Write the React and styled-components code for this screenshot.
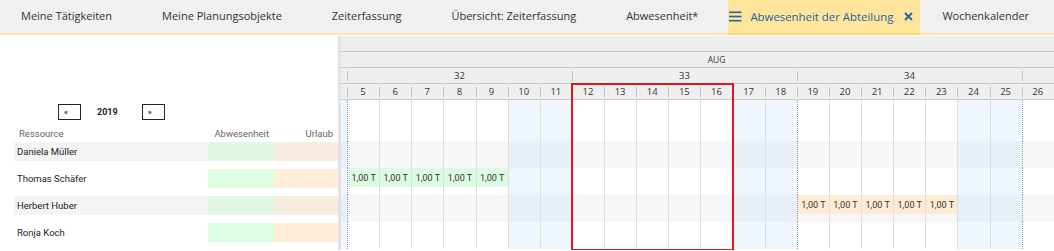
import React from 'react';
import styled, { createGlobalStyle } from 'styled-components';

const COL = 32.14;

const GlobalStyle = createGlobalStyle`
  html, body {
    margin: 0;
    padding: 0;
    background: #fff;
    overflow: hidden;
  }
  body {
    font-family: Roboto, "Liberation Sans", sans-serif;
    color: #333;
  }
`;

const TabBar = styled.div`
  display: flex;
  height: 33px;
  background-color: #f0f0f0;
  border-bottom: 2px solid #fde8a6;
`;

const Tab = styled.div`
  box-sizing: border-box;
  display: flex;
  align-items: center;
  gap: 8px;
  padding: 0 25px 2px;
  font-family: "Open Sans", "Noto Sans", sans-serif;
  font-size: 11px;
  color: #333;
  white-space: nowrap;

  &:first-child {
    padding-left: 21px;
  }
`;

const ActiveTab = styled(Tab)`
  padding: 0 7px 0 1px;
  margin-left: 5px;
  margin-bottom: -2px;
  background-color: #ffe59b;
  border-bottom: 2px solid #fcd873;
  color: #2562a7;
  font-size: 11.4px;
  & + div {
    padding-left: 22px;
  }
`;

const CloseMark = styled.span`
  display: flex;
  margin-left: 3px;
`;

const Main = styled.div`
  display: flex;
  padding-top: 1px;
`;

const LeftPanel = styled.div`
  width: 338px;
  flex-shrink: 0;
  padding-top: 68px;
`;

const YearNav = styled.div`
  display: flex;
  align-items: center;
  height: 16px;
  padding-left: 58px;
`;

const YearButton = styled.div`
  box-sizing: border-box;
  width: 23px;
  height: 16px;
  border: 1px solid #222;
  background: #fff;
  font-size: 8px;
  font-weight: bold;
  line-height: 13px;
  padding-left: 5px;
  color: #222;
`;

const YearLabel = styled.div`
  margin: 0 24px 0 16px;
  font-size: 9px;
  font-weight: bold;
  color: #222;
`;

const ResGrid = styled.div`
  display: grid;
  grid-template-columns: 194px 66px 64px;
  margin-left: 14px;
`;

const HeadCell = styled.div`
  box-sizing: border-box;
  height: 22px;
  display: flex;
  align-items: flex-end;
  justify-content: ${(p) => (p.right ? 'flex-end' : 'flex-start')};
  padding: 0 ${(p) => (p.right ? '5px' : '0')} 3px ${(p) => (p.right ? '0' : '5px')};
  font-size: 9.5px;
  color: #666;
`;

const ResCell = styled.div`
  box-sizing: border-box;
  height: 19px;
  margin-bottom: 8px;
  display: flex;
  align-items: center;
  padding-left: 3px;
  font-size: 9.5px;
  color: #222;
  background-color: ${(p) => p.bg};
`;

const Divider = styled.div`
  width: 3px;
  flex-shrink: 0;
  background-color: #e4e0e9;
`;

const Timeline = styled.div`
  position: relative;
  flex: 1;
  overflow: hidden;
`;

const TimelineInner = styled.div`
  margin-left: ${-(COL - 6)}px;
  width: ${COL * 23}px;
`;

const HeadRow = styled.div`
  display: flex;
  height: 15px;
  background-color: #efefef;
  border-bottom: 1px solid #cbcbcb;
  font-family: "Open Sans", "Noto Sans", sans-serif;
  font-size: 9.5px;
  color: #333;
`;

const MonthCell = styled.div`
  flex-shrink: 0;
  width: ${COL * 31}px;
  margin-left: ${-COL * 3}px;
  text-align: center;
  line-height: 15px;
  font-size: 8.5px;
`;

const TickCell = styled.div`
  position: relative;
  flex-shrink: 0;
  width: ${(p) => p.span * COL}px;
  text-align: center;
  line-height: 15px;

  &::before {
    content: '';
    position: absolute;
    left: 0;
    top: 3px;
    bottom: 2px;
    border-left: 1px solid #c4c4c4;
  }
`;

const Spacer = styled.div`
  display: flex;
  height: 41px;
`;

const BodyRow = styled.div`
  display: flex;
  height: 27px;
  background-color: ${(p) => (p.striped ? '#f7f7f7' : '#fff')};
`;

const DayCell = styled.div`
  box-sizing: border-box;
  flex-shrink: 0;
  width: ${COL}px;
  border-left: 1px ${(p) => (p.monday ? 'dotted #8d97ab' : 'solid #dedede')};
  background-color: ${(p) => (p.weekend ? 'rgba(190, 220, 250, 0.25)' : 'transparent')};
`;

const Chip = styled.div`
  height: 19px;
  display: flex;
  align-items: center;
  justify-content: center;
  background-color: ${(p) => (p.kind === 'vacation' ? '#ffecd5' : '#dbfce2')};
  font-size: 9px;
  color: #333;
  white-space: nowrap;
`;

const Highlight = styled.div`
  position: absolute;
  left: 230px;
  top: 47px;
  width: 163px;
  height: 168px;
  box-sizing: border-box;
  border: 2px solid #e5151c;
  pointer-events: none;
`;

const tabs = [
  'Meine Tätigkeiten',
  'Meine Planungsobjekte',
  'Zeiterfassung',
  'Übersicht: Zeiterfassung',
  'Abwesenheit*',
];

// day 4 is the Sunday that only peeks in at the left edge
const days = Array.from({ length: 23 }, (_, i) => i + 4);
const isWeekend = (d) => [4, 10, 11, 17, 18, 24, 25].includes(d);
const isMonday = (d) => [5, 12, 19, 26].includes(d);

const weeks = [
  { label: '', span: 1 },
  { label: '32', span: 7 },
  { label: '33', span: 7 },
  { label: '34', span: 7 },
  { label: '', span: 1 },
];

const people = [
  { name: 'Daniela Müller', entries: {} },
  { name: 'Thomas Schäfer', entries: { 5: 'absence', 6: 'absence', 7: 'absence', 8: 'absence', 9: 'absence' } },
  { name: 'Herbert Huber', entries: { 19: 'vacation', 20: 'vacation', 21: 'vacation', 22: 'vacation', 23: 'vacation' } },
  { name: 'Ronja Koch', entries: {} },
];

const MenuIcon = () => (
  <svg width="13" height="11" viewBox="0 0 13 11">
    <rect x="0" y="0.5" width="12.5" height="1.6" fill="#2562a7" />
    <rect x="0" y="4.7" width="12.5" height="1.6" fill="#2562a7" />
    <rect x="0" y="8.9" width="12.5" height="1.6" fill="#2562a7" />
  </svg>
);

const CloseIcon = () => (
  <svg width="9" height="9" viewBox="0 0 9 9">
    <path d="M1 1 L8 8 M8 1 L1 8" stroke="#2562a7" strokeWidth="1.8" />
  </svg>
);

const App = () => {
  return (
    <>
      <GlobalStyle />
      <TabBar>
        {tabs.map((t) => (
          <Tab key={t}>{t}</Tab>
        ))}
        <ActiveTab>
          <MenuIcon />
          Abwesenheit der Abteilung
          <CloseMark>
            <CloseIcon />
          </CloseMark>
        </ActiveTab>
        <Tab>Wochenkalender</Tab>
      </TabBar>

      <Main>
        <LeftPanel>
          <YearNav>
            <YearButton>«</YearButton>
            <YearLabel>2019</YearLabel>
            <YearButton>»</YearButton>
          </YearNav>
          <ResGrid>
            <HeadCell>Ressource</HeadCell>
            <HeadCell right>Abwesenheit</HeadCell>
            <HeadCell right>Urlaub</HeadCell>
            {people.map((p, i) => {
              const striped = i % 2 === 0;
              return (
                <React.Fragment key={p.name}>
                  <ResCell bg={striped ? '#f4f4f4' : '#fff'}>{p.name}</ResCell>
                  <ResCell bg={striped ? '#e3f7e6' : '#dcfde2'} />
                  <ResCell bg={striped ? '#f7ede0' : '#ffedd7'} />
                </React.Fragment>
              );
            })}
          </ResGrid>
        </LeftPanel>

        <Divider />

        <Timeline>
          <TimelineInner>
            <HeadRow />
            <HeadRow>
              <MonthCell>AUG</MonthCell>
            </HeadRow>
            <HeadRow>
              {weeks.map((w, i) => (
                <TickCell key={i} span={w.span}>
                  {w.label}
                </TickCell>
              ))}
            </HeadRow>
            <HeadRow>
              {days.map((d) => (
                <TickCell key={d} span={1}>
                  {d > 4 ? d : ''}
                </TickCell>
              ))}
            </HeadRow>

            <Spacer>
              {days.map((d) => (
                <DayCell key={d} weekend={isWeekend(d)} monday={isMonday(d)} />
              ))}
            </Spacer>
            {people.map((p, i) => (
              <BodyRow key={p.name} striped={i % 2 === 0}>
                {days.map((d) => (
                  <DayCell key={d} weekend={isWeekend(d)} monday={isMonday(d)}>
                    {p.entries[d] && <Chip kind={p.entries[d]}>1,00 T</Chip>}
                  </DayCell>
                ))}
              </BodyRow>
            ))}
          </TimelineInner>
          <Highlight />
        </Timeline>
      </Main>
    </>
  );
};

export default App;
